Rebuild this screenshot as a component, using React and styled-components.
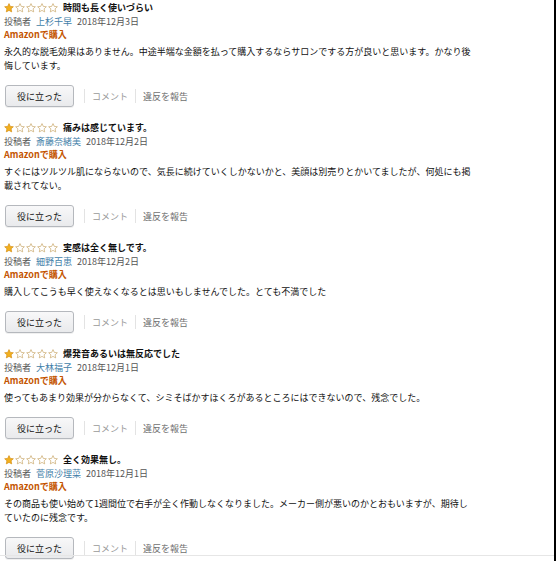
import React from "react";
import styled, { createGlobalStyle } from "styled-components";

const Global = createGlobalStyle`
  html, body { margin: 0; padding: 0; background: #fff; }
  body { font-family: "Noto Sans CJK JP", "Noto Sans", sans-serif; }
`;

const Page = styled.div`
  width: 554px;
  height: 561px;
  border-right: 2px solid #000;
  background: #fff;
  overflow: hidden;
  position: relative;
  padding-top: 1px;
  box-sizing: content-box;
`;

const List = styled.div`
  display: flex;
  flex-direction: column;
`;

const Review = styled.section`
  display: flex;
  flex-direction: column;
  padding: 0 0 14px 4px;
`;

const TitleRow = styled.div`
  display: flex;
  align-items: center;
  height: 14px;
`;

const Stars = styled.div`
  display: flex;
  gap: 1px;
  margin-right: 5px;
`;

const Title = styled.span`
  font-size: 9px;
  font-weight: 700;
  color: #111;
  line-height: 14px;
`;

const Meta = styled.div`
  height: 13px;
  line-height: 13px;
  font-size: 9px;
  color: #555;
  display: flex;
  gap: 5px;
`;

const Author = styled.span`
  color: #3f7ea8;
`;

const Verified = styled.div`
  height: 13px;
  line-height: 13px;
  font-size: 9px;
  font-weight: 700;
  color: #c45500;
`;

const Body = styled.p`
  margin: 4px 0 0;
  font-size: 9px;
  line-height: 14px;
  color: #111;
  white-space: pre-line;
`;

const Actions = styled.div`
  display: flex;
  align-items: center;
  margin-top: 12px;
  height: 22px;
`;

const HelpButton = styled.button`
  width: 69px;
  height: 22px;
  margin-left: 1px;
  border: 1px solid #b5b8bd;
  border-radius: 3px;
  background: linear-gradient(#f8f8f9, #e9eaec);
  font-family: inherit;
  font-size: 9px;
  color: #111;
  padding: 0;
  box-shadow: 0 1px 0 rgba(0,0,0,0.06);
`;

const Divider = styled.span`
  width: 1px;
  height: 14px;
  background: #e3e3e3;
  margin: 0 7px 0 ${p => p.$first ? 10 : 7}px;
`;

const ActionLink = styled.span`
  font-size: 9px;
  color: ${p => p.$light ? "#9a9a9a" : "#6f6f6f"};
`;

const BottomRule = styled.div`
  position: absolute;
  left: 0;
  right: 0;
  top: 555px;
  height: 1px;
  background: #e6e6e6;
`;

const Star = ({ filled }) => (
  <svg width="10" height="10" viewBox="0 0 20 20">
    <path
      d="M10 1.2l2.6 5.6 6.1.7-4.5 4.2 1.2 6.1L10 14.8l-5.4 3 1.2-6.1L1.3 7.5l6.1-.7z"
      fill={filled ? "#f2b01e" : "#fff"}
      stroke={filled ? "#d58f17" : "#c8a76a"}
      strokeWidth="1.4"
      strokeLinejoin="round"
    />
  </svg>
);

const reviews = [
  {
    title: "時間も長く使いづらい",
    author: "上杉千早",
    date: "2018年12月3日",
    body: "永久的な脱毛効果はありません。中途半端な金額を払って購入するならサロンでする方が良いと思います。かなり後\n悔しています。",
  },
  {
    title: "痛みは感じています。",
    author: "斎藤奈緒美",
    date: "2018年12月2日",
    body: "すぐにはツルツル肌にならないので、気長に続けていくしかないかと、美顔は別売りとかいてましたが、何処にも掲\n載されてない。",
  },
  {
    title: "実感は全く無しです。",
    author: "細野百恵",
    date: "2018年12月2日",
    body: "購入してこうも早く使えなくなるとは思いもしませんでした。とても不満でした",
  },
  {
    title: "爆発音あるいは無反応でした",
    author: "大林福子",
    date: "2018年12月1日",
    body: "使ってもあまり効果が分からなくて、シミそばかすほくろがあるところにはできないので、残念でした。",
  },
  {
    title: "全く効果無し。",
    author: "菅原沙理菜",
    date: "2018年12月1日",
    body: "その商品も使い始めて1週間位で右手が全く作動しなくなりました。メーカー側が悪いのかとおもいますが、期待し\nていたのに残念です。",
  },
];

export default function App() {
  return (
    <>
      <Global />
      <Page>
        <List>
          {reviews.map((r, i) => (
            <Review key={i}>
              <TitleRow>
                <Stars>
                  {[0, 1, 2, 3, 4].map(s => <Star key={s} filled={s === 0} />)}
                </Stars>
                <Title>{r.title}</Title>
              </TitleRow>
              <Meta>
                <span>投稿者</span>
                <Author>{r.author}</Author>
                <span>{r.date}</span>
              </Meta>
              <Verified>Amazonで購入</Verified>
              <Body>{r.body}</Body>
              <Actions>
                <HelpButton>役に立った</HelpButton>
                <Divider $first />
                <ActionLink $light>コメント</ActionLink>
                <Divider />
                <ActionLink>違反を報告</ActionLink>
              </Actions>
            </Review>
          ))}
        </List>
        <BottomRule />
      </Page>
    </>
  );
}
